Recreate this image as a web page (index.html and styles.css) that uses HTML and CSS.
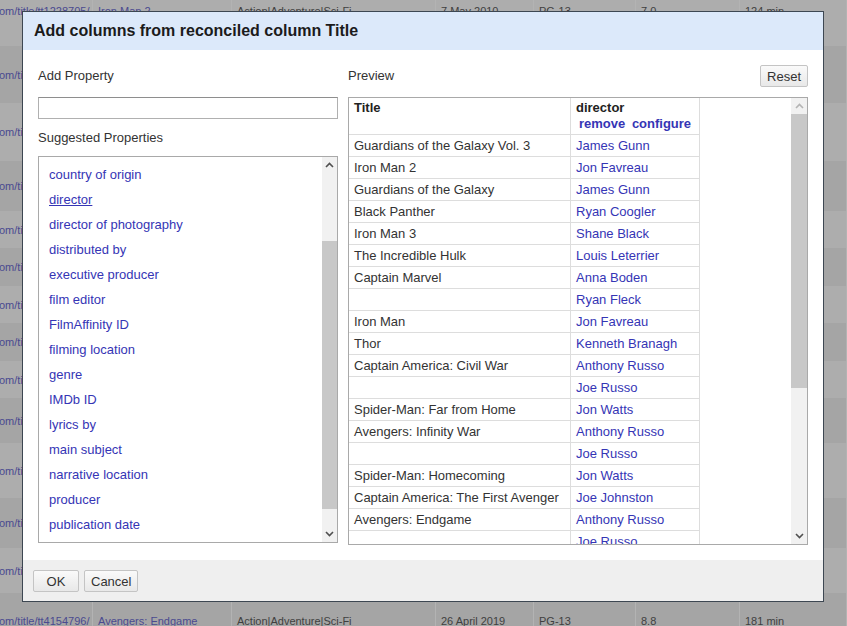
FILE: index.html
```html
<!DOCTYPE html>
<html>
<head>
<meta charset="utf-8">
<title>Add columns from reconciled column Title</title>
<link rel="stylesheet" href="styles.css">
</head>
<body>
<div class="backdrop">
  <div class="bg-row"><span class="bl first">om/title/tt1228705/</span><span class="bl">Iron Man 2</span><span>Action|Adventure|Sci-Fi</span><span>7 May 2010</span><span>PG-13</span><span>7.0</span><span>124 min</span></div>
  <div class="bg-row"><span class="bl first">om/title/tt6791350/</span><span class="bl">Guardians of the Galaxy Vol. 3</span><span>Action|Adventure|Comedy</span><span>5 May 2023</span><span>PG-13</span><span>7.9</span><span>150 min</span></div>
  <div class="bg-row"><span class="bl first">om/title/tt2015381/</span><span class="bl">Guardians of the Galaxy</span><span>Action|Adventure|Comedy</span><span>1 August 2014</span><span>PG-13</span><span>8.0</span><span>121 min</span></div>
  <div class="bg-row"><span class="bl first">om/title/tt1825683/</span><span class="bl">Black Panther</span><span>Action|Adventure|Sci-Fi</span><span>16 February 2018</span><span>PG-13</span><span>7.3</span><span>134 min</span></div>
  <div class="bg-row"><span class="bl first">om/title/tt1300854/</span><span class="bl">Iron Man 3</span><span>Action|Adventure|Sci-Fi</span><span>3 May 2013</span><span>PG-13</span><span>7.1</span><span>130 min</span></div>
  <div class="bg-row"><span class="bl first">om/title/tt0800080/</span><span class="bl">The Incredible Hulk</span><span>Action|Adventure|Sci-Fi</span><span>13 June 2008</span><span>PG-13</span><span>6.6</span><span>112 min</span></div>
  <div class="bg-row"><span class="bl first">om/title/tt4154664/</span><span class="bl">Captain Marvel</span><span>Action|Adventure|Sci-Fi</span><span>8 March 2019</span><span>PG-13</span><span>6.8</span><span>123 min</span></div>
  <div class="bg-row"><span class="bl first">om/title/tt0371746/</span><span class="bl">Iron Man</span><span>Action|Adventure|Sci-Fi</span><span>2 May 2008</span><span>PG-13</span><span>7.9</span><span>126 min</span></div>
  <div class="bg-row"><span class="bl first">om/title/tt0800369/</span><span class="bl">Thor</span><span>Action|Adventure|Fantasy</span><span>6 May 2011</span><span>PG-13</span><span>7.0</span><span>115 min</span></div>
  <div class="bg-row"><span class="bl first">om/title/tt3498820/</span><span class="bl">Captain America: Civil War</span><span>Action|Adventure|Sci-Fi</span><span>6 May 2016</span><span>PG-13</span><span>7.8</span><span>147 min</span></div>
  <div class="bg-row"><span class="bl first">om/title/tt6320628/</span><span class="bl">Spider-Man: Far from Home</span><span>Action|Adventure|Comedy</span><span>2 July 2019</span><span>PG-13</span><span>7.4</span><span>129 min</span></div>
  <div class="bg-row"><span class="bl first">om/title/tt4154756/</span><span class="bl">Avengers: Infinity War</span><span>Action|Adventure|Sci-Fi</span><span>27 April 2018</span><span>PG-13</span><span>8.4</span><span>149 min</span></div>
  <div class="bg-row"><span class="bl first">om/title/tt2250912/</span><span class="bl">Spider-Man: Homecoming</span><span>Action|Adventure|Sci-Fi</span><span>7 July 2017</span><span>PG-13</span><span>7.4</span><span>133 min</span></div>
  <div class="bg-row"><span class="bl first">om/title/tt4154796/</span><span class="bl">Avengers: Endgame</span><span>Action|Adventure|Sci-Fi</span><span>26 April 2019</span><span>PG-13</span><span>8.8</span><span>181 min</span></div>
</div>

<div class="dialog">
  <div class="dlg-header">Add columns from reconciled column Title</div>
  <div class="dlg-body">
    <div class="col-left">
      <div class="lbl-row"><span class="lbl">Add Property</span></div>
      <input class="prop-input" type="text">
      <div class="lbl sugg">Suggested Properties</div>
      <div class="list-box">
        <ul class="prop-list">
          <li><a>country of origin</a></li>
          <li><a class="hover">director</a></li>
          <li><a>director of photography</a></li>
          <li><a>distributed by</a></li>
          <li><a>executive producer</a></li>
          <li><a>film editor</a></li>
          <li><a>FilmAffinity ID</a></li>
          <li><a>filming location</a></li>
          <li><a>genre</a></li>
          <li><a>IMDb ID</a></li>
          <li><a>lyrics by</a></li>
          <li><a>main subject</a></li>
          <li><a>narrative location</a></li>
          <li><a>producer</a></li>
          <li><a>publication date</a></li>
        </ul>
        <div class="vscroll">
          <div class="arrow"><svg width="9" height="6" viewBox="0 0 9 6"><polyline points="1,5 4.5,1.5 8,5" fill="none" stroke="#505050" stroke-width="1.6"/></svg></div>
          <div class="track"><div class="thumb list-thumb"></div></div>
          <div class="arrow"><svg width="9" height="6" viewBox="0 0 9 6"><polyline points="1,1 4.5,4.5 8,1" fill="none" stroke="#505050" stroke-width="1.6"/></svg></div>
        </div>
      </div>
    </div>
    <div class="col-right">
      <div class="lbl-row"><span class="lbl">Preview</span><button class="btn">Reset</button></div>
      <div class="preview-box">
        <div class="preview-scroll">
          <table class="pv-table">
            <thead>
              <tr><th class="c-title">Title</th><th class="c-dir">director<br><a class="act">remove</a> <a class="act">configure</a></th></tr>
            </thead>
            <tbody>
              <tr><td>Guardians of the Galaxy Vol. 3</td><td><a>James Gunn</a></td></tr>
              <tr><td>Iron Man 2</td><td><a>Jon Favreau</a></td></tr>
              <tr><td>Guardians of the Galaxy</td><td><a>James Gunn</a></td></tr>
              <tr><td>Black Panther</td><td><a>Ryan Coogler</a></td></tr>
              <tr><td>Iron Man 3</td><td><a>Shane Black</a></td></tr>
              <tr><td>The Incredible Hulk</td><td><a>Louis Leterrier</a></td></tr>
              <tr><td>Captain Marvel</td><td><a>Anna Boden</a></td></tr>
              <tr><td></td><td><a>Ryan Fleck</a></td></tr>
              <tr><td>Iron Man</td><td><a>Jon Favreau</a></td></tr>
              <tr><td>Thor</td><td><a>Kenneth Branagh</a></td></tr>
              <tr><td>Captain America: Civil War</td><td><a>Anthony Russo</a></td></tr>
              <tr><td></td><td><a>Joe Russo</a></td></tr>
              <tr><td>Spider-Man: Far from Home</td><td><a>Jon Watts</a></td></tr>
              <tr><td>Avengers: Infinity War</td><td><a>Anthony Russo</a></td></tr>
              <tr><td></td><td><a>Joe Russo</a></td></tr>
              <tr><td>Spider-Man: Homecoming</td><td><a>Jon Watts</a></td></tr>
              <tr><td>Captain America: The First Avenger</td><td><a>Joe Johnston</a></td></tr>
              <tr><td>Avengers: Endgame</td><td><a>Anthony Russo</a></td></tr>
              <tr><td></td><td><a>Joe Russo</a></td></tr>
              <tr><td>Thor: Ragnarok</td><td><a>Taika Waititi</a></td></tr>
            </tbody>
          </table>
        </div>
        <div class="vscroll pv-vscroll">
          <div class="arrow"><svg width="9" height="6" viewBox="0 0 9 6"><polyline points="1,5 4.5,1.5 8,5" fill="none" stroke="#b4b4b4" stroke-width="1.6"/></svg></div>
          <div class="track"><div class="thumb pv-thumb"></div></div>
          <div class="arrow"><svg width="9" height="6" viewBox="0 0 9 6"><polyline points="1,1 4.5,4.5 8,1" fill="none" stroke="#505050" stroke-width="1.6"/></svg></div>
        </div>
      </div>
    </div>
  </div>
  <div class="dlg-footer"><button class="btn ok">OK</button><button class="btn">Cancel</button></div>
</div>
</body>
</html>
```

FILE: styles.css
```css
* { box-sizing: border-box; }
html, body { margin: 0; padding: 0; }
body {
  width: 847px;
  height: 626px;
  overflow: hidden;
  position: relative;
  background: #aaaaaa;
  font-family: "Liberation Sans", Arial, sans-serif;
  font-size: 13px;
  color: #333;
}

/* background data table seen through the overlay */
.backdrop {
  display: grid;
  grid-template-rows: 70px 57px 58px 50px 37px 38px 37px 38px 37px 45px 55px 50px 45px 56px;
  margin-top: -24px;
  font-size: 11px;
}
.bg-row {
  display: grid;
  grid-template-columns: 93px 139px 204px 98px 102px 104px 1fr;
  background: #adadad;
  color: #3f3f3f;
}
.bg-row:nth-child(even) { background: #a5a5a5; }
.bg-row span {
  display: flex;
  align-items: center;
  padding-left: 5px;
  border-right: 1px solid #b3b3b3;
  white-space: nowrap;
  overflow: hidden;
}
.bg-row span.first { padding-left: 0; text-indent: -1px; }
.bg-row .bl { color: #4a4a90; }

/* dialog */
.dialog {
  position: absolute;
  left: 22px;
  top: 11px;
  width: 802px;
  height: 591px;
  border: 1px solid #3d4752;
  background: #fff;
  display: flex;
  flex-direction: column;
}
.dlg-header {
  height: 38px;
  line-height: 38px;
  padding-left: 11px;
  background: #dce9fa;
  font-size: 16px;
  font-weight: bold;
  color: #1b1b1b;
}
.dlg-body {
  height: 510px;
  padding: 15px 15px 0;
  display: flex;
  gap: 10px;
}
.dlg-footer {
  height: 41px;
  padding: 10px 10px 0;
  background: #efefef;
  display: flex;
  gap: 5px;
  align-items: flex-start;
}

.col-left { width: 300px; display: flex; flex-direction: column; }
.col-right { width: 460px; display: flex; flex-direction: column; }
.lbl-row {
  height: 22px;
  margin-bottom: 10px;
  display: flex;
  align-items: center;
  justify-content: space-between;
}
.lbl { line-height: 16px; color: #333; }
.prop-input {
  display: block;
  width: 300px;
  height: 22px;
  margin: 0;
  padding: 0 3px;
  border: 1px solid #b0b0b0;
  border-top-color: #8e8e8e;
  border-radius: 0;
  font-family: inherit;
  font-size: 13px;
  background: #fff;
}
.sugg { margin: 11px 0 10px; }

.list-box {
  height: 387px;
  border: 1px solid #a9a9a9;
  display: flex;
}
.prop-list {
  flex: 1;
  margin: 0;
  padding: 5px 10px 0;
  list-style: none;
  overflow: hidden;
}
.prop-list li { height: 25px; line-height: 25px; white-space: nowrap; }
.prop-list a, .pv-table a { color: #3535b5; text-decoration: none; }
.prop-list a.hover { text-decoration: underline; }

/* fake scrollbars */
.vscroll {
  width: 15px;
  background: #f1f1f1;
  display: flex;
  flex-direction: column;
}
.pv-vscroll { width: 16px; }
.arrow {
  height: 16px;
  display: flex;
  align-items: center;
  justify-content: center;
}
.track { flex: 1; }
.thumb { background: #c8c8c8; }
.list-thumb { margin-top: 68px; height: 268px; }
.pv-thumb { height: 274px; }

/* preview */
.preview-box {
  height: 448px;
  border: 1px solid #a9a9a9;
  display: flex;
}
.preview-scroll { flex: 1; overflow: hidden; }
.pv-table {
  border-collapse: separate;
  border-spacing: 0;
  table-layout: fixed;
  width: 351px;
}
.pv-table th, .pv-table td {
  border-right: 1px solid #dddddd;
  border-bottom: 1px solid #dddddd;
  padding: 0 5px;
  text-align: left;
  white-space: nowrap;
  overflow: hidden;
}
.pv-table td { height: 22px; line-height: 21px; color: #333; }
.pv-table th {
  padding: 2px 5px 2px;
  line-height: 16px;
  vertical-align: top;
  font-weight: bold;
  color: #222;
}
.pv-table .c-title { width: 222px; }
.pv-table .c-dir { width: 129px; }
.pv-table .act { margin-left: 3px; }

/* buttons */
.btn {
  height: 22px;
  margin: 0;
  padding: 0 6px;
  border: 1px solid #c4c4c4;
  border-radius: 2px;
  background: linear-gradient(#fafafa, #e8e8e8);
  font-family: inherit;
  font-size: 13px;
  color: #333;
}
.ok { min-width: 46px; }
```
